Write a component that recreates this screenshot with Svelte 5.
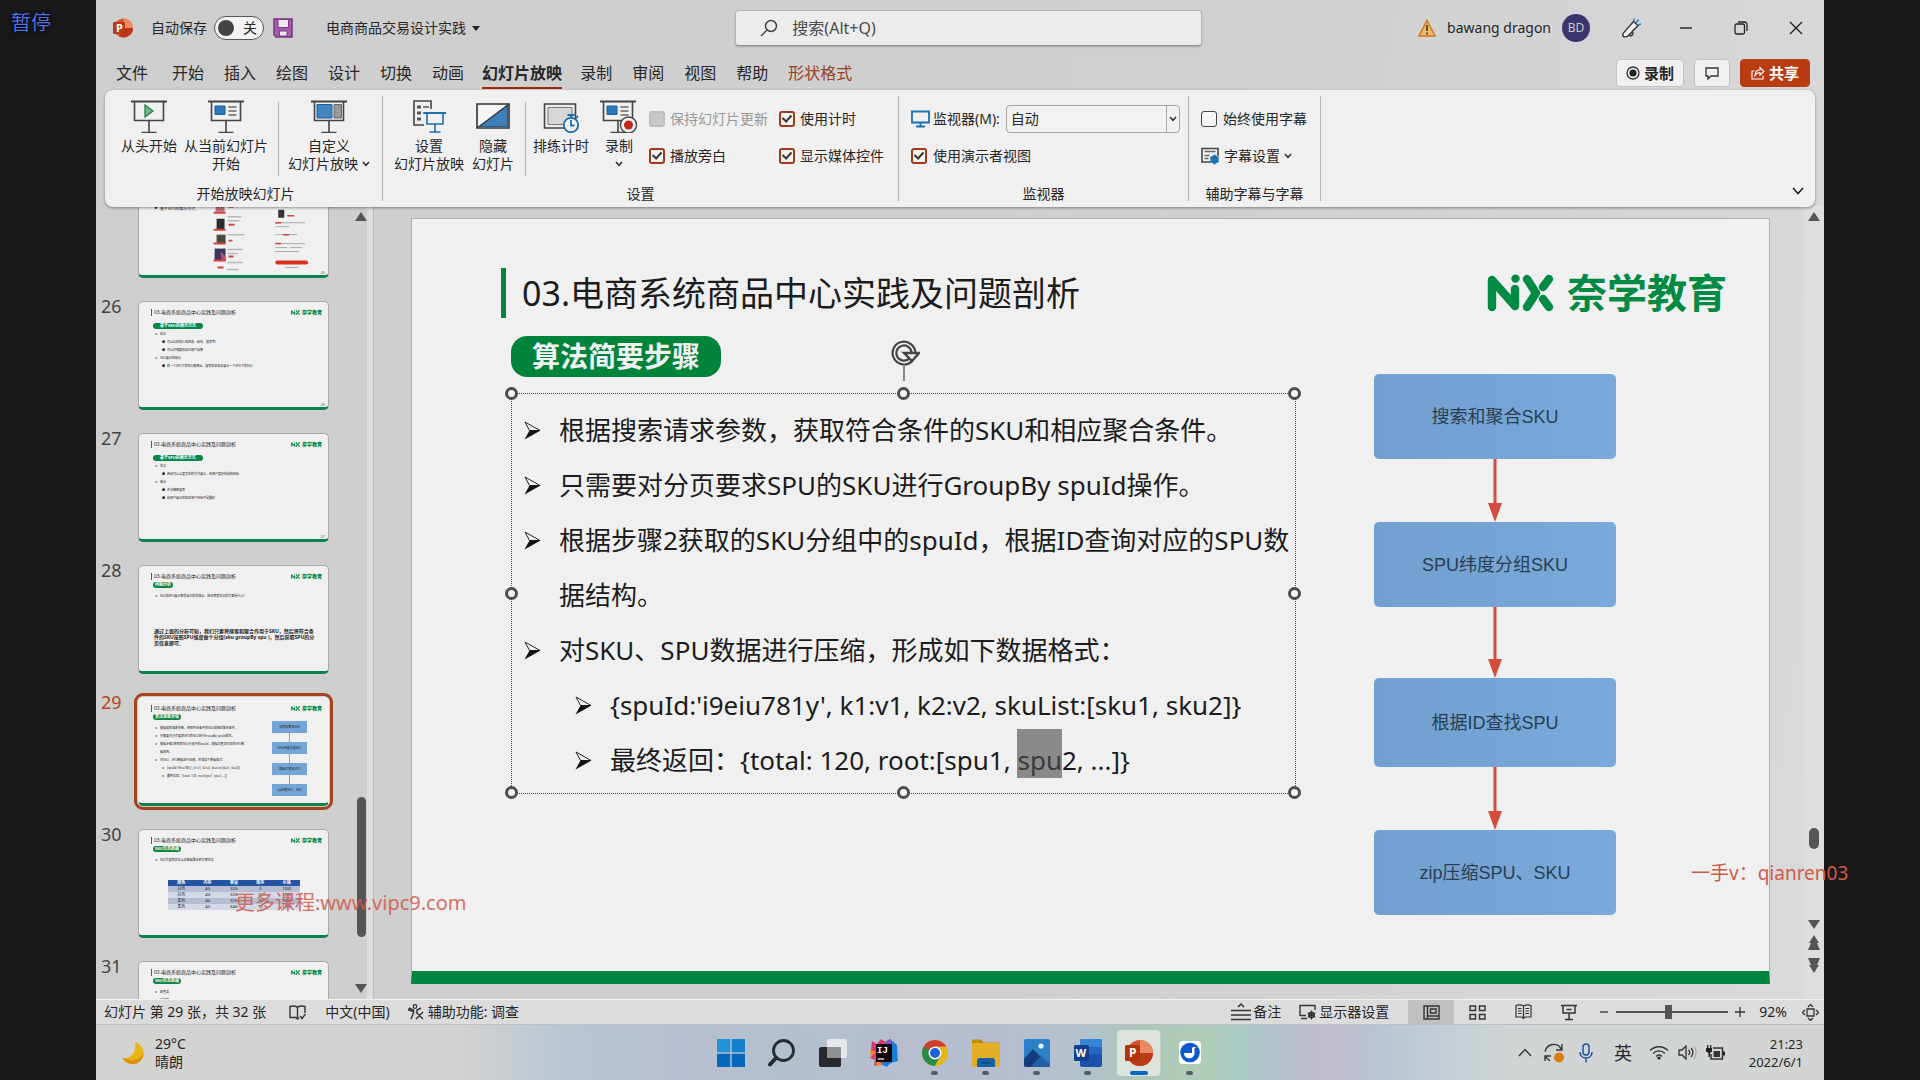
<script>
  const tabs = ['文件', '开始', '插入', '绘图', '设计', '切换', '动画', '幻灯片放映', '录制', '审阅', '视图', '帮助', '形状格式'];
  const deckTitle = '03.电商系统商品中心实践及问题剖析';
  const thumbs = [
    { n: 25, kind: 'shots' },
    { n: 26, kind: 'list', wide: true, badge: '基于SKU的展示方式', items: [[0, '优点'], [1, '可以比较和价格筛选（品名、搜索等）'], [1, '可以仔细甄别自己想产品哪'], [0, 'SKU展示的缺点'], [1, '同一个SPU下的SKU很相似，搜索结果容易展示一个SPU下的SKU']] },
    { n: 27, kind: 'list', wide: true, badge: '基于SPU的展示方式', items: [[0, '优点'], [1, '商品可以以更灵活的方式展示，给用户更好的选择体验'], [0, '缺点'], [1, '无法精确搜索'], [1, '给用户展示的结果用户体验不是最好'] ] },
    { n: 28, kind: 'list', badge: '问题分析', items: [[0, 'SKU和SPU展示都有自己的优缺点，结合两者优点的方案是什么?']], note: '通过上面的分析可知，我们只要将搜索和聚合作用于SKU，然后将符合条件的SKU按照SPU维度做个分组(sku groupBy spu )，然后获取SPU的分页信息即可。' },
    { n: 29, kind: 'list', badge: '算法简要步骤', flow: true, items: [[0, '根据搜索请求参数，获取符合条件的SKU和相应聚合条件。'], [0, '只需要对分页要求SPU的SKU进行GroupBy spuId操作。'], [0, '根据步骤2获取的SKU分组中的spuId，根据ID查询对应的SPU数\n据结构。'], [0, '对SKU、SPU数据进行压缩，形成如下数据格式：'], [1, "{spuId:'i9eiu781y', k1:v1, k2:v2, skuList:[sku1, sku2]}"], [1, '最终返回：{total: 120, root:[spu1, spu2, ...]}']] },
    { n: 30, kind: 'list', badge: 'SKU信息数据', items: [[0, 'SKU为搜索优化以及数据聚合的方案优化']], table: true },
    { n: 31, kind: 'list', badge: 'SKU信息数据', items: [[0, '颜色类'], [0, '规格类']] }
  ];
  const rows = [['白色', '4G', '32G', '0', '1000'], ['白色', '4G', '62G', '20', '1200'], ['黑色', '4G', '32G', '10', '1000'], ['黑色', '4G', '64G', '10', '1200']];
  const steps = ['搜索和聚合SKU', 'SPU纬度分组SKU', '根据ID查找SPU', 'zip压缩SPU、SKU'];
  const handles = ['tl', 'tc', 'tr', 'ml', 'mr', 'bl', 'bc', 'br'];
</script>

{#snippet chev()}
  <svg class="chev" width="8" height="6" viewBox="0 0 8 6"><path d="M1 1l3 3.4L7 1" fill="none" stroke="#333" stroke-width="1.6" /></svg>
{/snippet}
{#snippet mark()}
  <svg class="mark" viewBox="0 0 68 38" aria-label="NX">
    <g fill="none" stroke="#008a44" stroke-width="8.4" stroke-linecap="round" stroke-linejoin="round">
      <path d="M5 33V6L28 32V15" /><path d="M40 5l9 14-9 14" /><path d="M62 5l-6 8M56 25l6 8" />
    </g>
    <circle cx="28.5" cy="4.6" r="4.2" fill="#008a44" />
  </svg>
{/snippet}
{#snippet screen()}
  <path d="M0 1.5h36" stroke="#444" stroke-width="2" /><path d="M3.5 2v18.500h29V2M18 20.500v12M10.500 32.500h15" fill="none" stroke="#444" stroke-width="1.600" />
{/snippet}
{#snippet arrowBullet()}
  <svg class="bullet" viewBox="0 0 17 19"><path d="M1 1l15 8.500H5.500z" fill="#f0f0f0" stroke="#222" stroke-width="1" /><path d="M5.500 9.500H16.500L.5 18.500z" fill="#111" /></svg>
{/snippet}

<div class="desktop" lang="zh-CN">
  <div class="paused">暂停</div>
  <div class="window">
    <header class="titlebar">
      <svg width="20" height="20" viewBox="0 0 20 20"><circle cx="10.500" cy="10" r="9.500" fill="#d35230" /><path d="M10.500.5a9.500 9.500 0 0 1 9.500 9.500h-9.500z" fill="#f08a60" /><path d="M10.500 10H20a9.500 9.500 0 0 1-14 8.300z" fill="#b8391a" /><rect y="4" width="12" height="12" rx="1" fill="#bd3a17" /><text x="3" y="14" font-size="11" font-weight="700" fill="#fff">P</text></svg>
      <label class="autosave">自动保存 <button class="toggle" role="switch" aria-checked="false"><i></i>关</button></label>
      <button class="bare save" aria-label="保存"><svg width="20" height="20" viewBox="0 0 20 20"><path d="M1 1h18v18H3l-2-2z" fill="#a55cab" stroke="#7b3684" stroke-width="1.500" /><path d="M5 1.500h10.500v8H5zM6.500 13h7.500v5H6.500z" fill="#f1e8f2" stroke="#7b3684" /></svg></button>
      <button class="bare doc">电商商品交易设计实践 <svg width="8" height="5" viewBox="0 0 8 5"><path d="M0 0h8L4 5z" fill="#222" /></svg></button>
      <label class="search"><svg width="18" height="18" viewBox="0 0 18 18"><circle cx="11" cy="7" r="5.500" fill="none" stroke="#444" stroke-width="1.500" /><path d="M7 11l-6 6" stroke="#444" stroke-width="1.500" /></svg><input aria-label="搜索" placeholder="搜索(Alt+Q)" /></label>
      <div class="account">
        <svg width="18" height="18" viewBox="0 0 18 18"><path d="M9 1.500L17 17H1z" fill="#eebb6c" stroke="#cc7a1c" stroke-width="1.500" /><path d="M9 6v6M9 13.500v2" stroke="#333" stroke-width="1.600" /></svg>
        <span class="user">bawang dragon</span><span class="avatar">BD</span>
        <button class="bare pen" aria-label="即将推出"><svg width="20" height="20" viewBox="0 0 20 20"><path d="M12.500 3.500l4.500 4-9 9.500c-1.500 2-3.500 2-5 1.800-1.500-.8-1.500-2-.8-3.500z" fill="#f2f2f2" stroke="#333" stroke-width="1.400" /><path d="M8.500 16c-.5 3 3.500 3 3.500-2" fill="none" stroke="#333" stroke-width="1.300" /><path d="M13 3V.5M15.500 4.500l2-3M17.500 7l2.500-1" stroke="#2579bd" stroke-width="1.500" /></svg></button>
        <button class="bare" aria-label="最小化"><svg width="14" height="14" viewBox="0 0 14 14"><path d="M1 7h12" stroke="#222" stroke-width="1.400" /></svg></button>
        <button class="bare" aria-label="还原"><svg width="14" height="14" viewBox="0 0 14 14"><rect x="1" y="3" width="9.500" height="10" rx="1.500" fill="none" stroke="#222" stroke-width="1.300" /><path d="M4 1h6.500a2.500 2.500 0 0 1 2.500 2.500V10" fill="none" stroke="#222" stroke-width="1.300" /></svg></button>
        <button class="bare" aria-label="关闭"><svg width="14" height="14" viewBox="0 0 14 14"><path d="M1 1l12 12M13 1L1 13" stroke="#222" stroke-width="1.400" /></svg></button>
      </div>
    </header>

    <nav class="tabs">
      {#each tabs as t}<button class="tab" class:on={t === '幻灯片放映'} class:ctx={t === '形状格式'}>{t}</button>{/each}
      <div class="actions">
        <button class="act"><svg width="14" height="14" viewBox="0 0 14 14"><circle cx="7" cy="7" r="6" fill="none" stroke="#333" stroke-width="1.300" /><circle cx="7" cy="7" r="3.600" fill="#222" /></svg>录制</button>
        <button class="act note" aria-label="批注"><svg width="14" height="13" viewBox="0 0 14 13"><path d="M1 1h12v8H6l-3 3V9H1z" fill="none" stroke="#333" stroke-width="1.300" /></svg></button>
        <button class="act share"><svg width="14" height="14" viewBox="0 0 14 14"><path d="M3.500 5H1v8h11V9.500M4 9.500c0-4 2-5.500 5-5.500V1.500L13 5.500l-4 3.500V6.500C7 6.500 5.500 7 4 9.500z" fill="none" stroke="#fff" stroke-width="1.100" /></svg>共享</button>
      </div>
    </nav>

    <section class="ribbon">
      <div class="group g1">
        <div class="tools">
          <button class="tool w66"><svg width="36" height="33" viewBox="0 0 36 33">{@render screen()}<path d="M14 5v12l8-6z" fill="#74b88c" stroke="#23824a" stroke-width="1.300" /></svg><span>从头开始</span></button>
          <button class="tool w88"><svg width="36" height="33" viewBox="0 0 36 33">{@render screen()}<path d="M7 6h10v8.500H7z" fill="#2e77b8" stroke="#1b5f9f" /><path d="M20.500 7h8M20.500 11h8M20.500 15h8" stroke="#666" stroke-width="1.500" /></svg><span>从当前幻灯片</span><span>开始</span></button>
          <i class="rule"></i>
          <button class="tool w88 custom"><svg width="36" height="33" viewBox="0 0 36 33">{@render screen()}<path d="M6 4.500h15V18H6z" fill="#4384bd" stroke="#1b5f9f" /><path d="M23 4.500h7.500V18H23z" fill="#999" stroke="#666" /></svg><span>自定义</span><span>幻灯片放映 {@render chev()}</span></button>
        </div>
        <h2>开始放映幻灯片</h2>
      </div>
      <div class="group g2">
        <div class="tools">
          <button class="tool w74"><svg width="36" height="33" viewBox="0 0 36 33"><path d="M13 25H3V1h17v8" fill="none" stroke="#444" stroke-width="1.600" /><path d="M6 5.500h4v3H6zM6 11.500h4v3H6zM6 17.500h4v3H6z" fill="#555" /><path d="M12 7h6M12 13h2" stroke="#555" stroke-width="1.400" /><path d="M13 13h22" stroke="#1d6fae" stroke-width="2" /><path d="M16 13v11h16V13M24 24v8M18.500 32h11" fill="none" stroke="#1d6fae" stroke-width="1.600" /></svg><span>设置</span><span>幻灯片放映</span></button>
          <button class="tool w54"><svg width="34" height="33" viewBox="0 0 34 33"><path d="M1 4h32v24H1z" fill="#f4f4f4" stroke="#333" stroke-width="1.600" /><path d="M31.500 6v20.500H4z" fill="#3f80b9" stroke="#1b5f9f" /><path d="M1 28L33 4" stroke="#333" stroke-width="1.200" /></svg><span>隐藏</span><span>幻灯片</span></button>
          <i class="rule"></i>
          <button class="tool w66"><svg width="36" height="33" viewBox="0 0 36 33"><path d="M1.500 4h31v24h-31z" fill="#eee" stroke="#444" stroke-width="1.600" /><path d="M5 7.500h24v17H5z" fill="#d8d6d8" stroke="#777" /><circle cx="28" cy="25" r="7.200" fill="#f0f0f0" stroke="#1d6fae" stroke-width="1.800" /><path d="M28 20v5.500h3.500M28 17.500V15M24.500 15h7M33 18l2-2" fill="none" stroke="#1d6fae" stroke-width="1.800" /></svg><span>排练计时</span></button>
          <button class="tool w46"><svg width="38" height="33" viewBox="0 0 38 33">{@render screen()}<path d="M7 6h10v8.500H7z" fill="#2e77b8" stroke="#1b5f9f" /><path d="M20.500 7h8M20.500 11h8M20.500 15h8" stroke="#666" stroke-width="1.500" /><circle cx="28.500" cy="25" r="8" fill="#f3f3f3" stroke="#444" stroke-width="1.400" /><circle cx="28.500" cy="25" r="4.500" fill="#c2261c" /></svg><span>录制</span><span>{@render chev()}</span></button>
          <div class="checks two">
            <label class="off"><input type="checkbox" disabled />保持幻灯片更新</label>
            <label><input type="checkbox" checked />使用计时</label>
            <label><input type="checkbox" checked />播放旁白</label>
            <label><input type="checkbox" checked />显示媒体控件</label>
          </div>
        </div>
        <h2>设置</h2>
      </div>
      <div class="group g3">
        <div class="checks one">
          <label><svg width="19" height="18" viewBox="0 0 19 18"><path d="M1 1.500h17v11H1zM9.500 12.500v4M5 16.500h9" fill="none" stroke="#1d6fae" stroke-width="1.800" /></svg><span class="mon">监视器(M):</span><span class="pick"><select><option>自动</option></select>{@render chev()}</span></label>
          <label><input type="checkbox" checked />使用演示者视图</label>
        </div>
        <h2>监视器</h2>
      </div>
      <div class="group g4">
        <div class="checks one">
          <label><input type="checkbox" />始终使用字幕</label>
          <button class="bare cap"><svg width="19" height="18" viewBox="0 0 19 18"><path d="M10 15H1V1.500h16V9" fill="#f2f2f2" stroke="#444" stroke-width="1.600" /><path d="M3.500 4.500h11M3.500 8.500h5M3.500 11.500h4" stroke="#666" stroke-width="1.300" /><circle cx="13.500" cy="12.500" r="3" fill="none" stroke="#1d6fae" stroke-width="2.400" /><path d="M13.500 7.500v10M9.200 10l8.600 5M9.200 15l8.600-5" stroke="#1d6fae" stroke-width="1.400" /></svg>字幕设置 {@render chev()}</button>
        </div>
        <h2>辅助字幕与字幕</h2>
      </div>
      <button class="bare fold" aria-label="折叠功能区"><svg width="12" height="8" viewBox="0 0 12 8"><path d="M1 1l5 5.500L11 1" fill="none" stroke="#222" stroke-width="1.600" /></svg></button>
    </section>

    <main class="work">
      <aside class="panel">
        <div class="strip">
          {#each thumbs as t, i}
            <div class="entry" class:sel={t.n === 29}>
              <span class="num">{i ? t.n : ''}</span>
              <div class="thumb">
                {#if t.kind === 'shots'}
                  <svg class="shots" viewBox="0 0 190 105">
                    <text x="21" y="40" font-size="4" fill="#222">基于SPU的展示方式</text><path d="M16 36.500l3 1.500-3 1.500z" fill="#222" />
                    <g fill="#2c2c30"><rect x="77" y="33" width="9" height="9" fill="#b5707c" /><rect x="78" y="49" width="8" height="11" /><rect x="78" y="65" width="9" height="9" fill="#4b4a3c" /><rect x="76" y="79" width="11" height="12" fill="#3a3860" /></g>
                    <path d="M82 82l5 5v4h-4z" fill="#c44a72" />
                    <path d="M75 43h12M75 60h12M75 74h12M75 91h12M79 98h6M90 37h5M90 55h6M90 71h4M90 87h5" stroke="#d0453a" stroke-width="2" />
                    <path d="M89 34h10M89 47h14M89 51h12M89 65h17M89 80h15M89 84h10M89 93h15M88 100h12" stroke="#b9b9b9" stroke-width="1.500" />
                    <path d="M135 36h28M137 53h30M137 57h14M137 65h22M137 74h30M137 78h12M152 78h12M137 82h24M147 98h13" stroke="#aaa" stroke-width="1" />
                    <rect x="140" y="40" width="6" height="8" fill="#333" /><path d="M149 46h7M137 53h6M145 65h6M137 74h6" stroke="#d0453a" stroke-width="1.500" /><rect x="137" y="91" width="33" height="4" rx="2" fill="#d8311f" />
                  </svg>
                {:else}
                  <div class="thead" class:wide={t.wide}><b></b><span>{deckTitle}</span><em>{@render mark()}奈学教育</em></div>
                  <strong class="tbadge">{t.badge}</strong>
                  <div class="tbody">
                    <ul>{#each t.items as [lvl, text]}<li class:sub={lvl === 1} class:dot={lvl === 1 && t.wide}>{text}</li>{/each}</ul>
                    {#if t.flow}<div class="tflow">{#each steps as s}<span>{s}</span>{/each}</div>{/if}
                  </div>
                  {#if t.note}<p>{t.note}</p>{/if}
                  {#if t.table}
                    <table><thead><tr><th>颜色</th><th>内存</th><th>容量</th><th>库存</th><th>价格</th></tr></thead>
                      <tbody>{#each rows as r}<tr>{#each r as c}<td>{c}</td>{/each}</tr>{/each}</tbody></table>
                  {/if}
                {/if}
                {#if t.n < 28}<small>{t.n}</small>{/if}
              </div>
            </div>
          {/each}
        </div>
        <div class="scroll left">
          <svg width="12" height="9" viewBox="0 0 12 9"><path d="M6 0l6 9H0z" fill="#555" /></svg>
          <i></i>
          <svg width="12" height="9" viewBox="0 0 12 9"><path d="M6 9l6-9H0z" fill="#555" /></svg>
        </div>
      </aside>

      <section class="canvas">
        <article class="slide">
          <div class="head"><h1>{deckTitle}</h1><div class="logo">{@render mark()}<span>奈学教育</span></div></div>
          <div class="content">
            <div class="left">
              <h3 class="badge">算法简要步骤</h3>
              <div class="textbox">
                <svg class="rot" width="30" height="44" viewBox="0 0 30 44"><path d="M14 26v15" stroke="#444" stroke-width="1.200" /><path d="M23.500 13a9.500 9.500 0 1 0-3 7" fill="none" stroke="#444" stroke-width="6" /><path d="M23.500 13a9.500 9.500 0 1 0-3 7" fill="none" stroke="#f0f0f0" stroke-width="1.600" /><path d="M14 13h15l-7 8z" fill="#f0f0f0" stroke="#444" stroke-width="2.400" /></svg>
                {#each handles as h}<i class="handle {h}"></i>{/each}
                <ul>
                  <li>{@render arrowBullet()}<span>根据搜索请求参数，获取符合条件的SKU和相应聚合条件。</span></li>
                  <li>{@render arrowBullet()}<span>只需要对分页要求SPU的SKU进行GroupBy spuId操作。</span></li>
                  <li>{@render arrowBullet()}<span>根据步骤2获取的SKU分组中的spuId，根据ID查询对应的SPU数据结构。</span></li>
                  <li>{@render arrowBullet()}<span>对SKU、SPU数据进行压缩，形成如下数据格式：</span></li>
                  <li class="sub">{@render arrowBullet()}<span>{"{spuId:'i9eiu781y', k1:v1, k2:v2, skuList:[sku1, sku2]}"}</span></li>
                  <li class="sub">{@render arrowBullet()}<span>{'最终返回：{total: 120, root:[spu1, '}<mark>spu</mark>{'2, ...]}'}</span></li>
                </ul>
              </div>
            </div>
            <div class="flow">
              {#each steps as s, i}
                {#if i}<svg class="arrow a{i}" width="14" viewBox="0 0 14 72" preserveAspectRatio="xMidYMax slice"><path d="M7 0v56" stroke="#d44c3c" stroke-width="3" /><path d="M0 53h14L7 72z" fill="#d44c3c" /></svg>{/if}
                <div class="step" class:tall={i === 2}>{s}</div>
              {/each}
            </div>
          </div>
        </article>
      </section>
      <div class="scroll right">
        <svg width="12" height="9" viewBox="0 0 12 9"><path d="M6 0l6 9H0z" fill="#555" /></svg>
        <i></i>
        <svg width="12" height="9" viewBox="0 0 12 9"><path d="M6 9l6-9H0z" fill="#555" /></svg>
        <svg width="12" height="16" viewBox="0 0 12 16"><path d="M6 0l5 8H9l3 7H0l3-7H1z" fill="#555" /></svg>
        <svg width="12" height="16" viewBox="0 0 12 16"><path d="M6 16l5-8H9l3-7H0l3 7H1z" fill="#555" /></svg>
      </div>
    </main>

    <footer class="status">
      <span>幻灯片 第 29 张，共 32 张</span>
      <svg class="book" width="17" height="15" viewBox="0 0 17 15"><path d="M8.500 2v10.500M8.500 2C6 .8 3 .8 1 1.500v11h6l1.500 1.500 1.500-1.500M8.500 2c2.500-1.200 5.500-1.200 7.500-.5V8M11 11l2 2.500L16.500 9" fill="none" stroke="#333" stroke-width="1.400" /></svg>
      <span class="langname">中文(中国)</span>
      <button class="bare"><svg width="16" height="16" viewBox="0 0 16 16"><circle cx="7" cy="2.500" r="1.800" fill="none" stroke="#333" stroke-width="1.200" /><path d="M1 4l4.500 2v3L3 15M13 4L9 6v2.500M1 4.500L0.500 6 5 7.500M8 8l7 7M15 8l-7 7" fill="none" stroke="#333" stroke-width="1.400" /></svg> 辅助功能: 调查</button>
      <div class="stright">
        <button class="bare notes"><svg width="20" height="18" viewBox="0 0 20 18"><path d="M0 7.500h20M0 12h20M0 16.500h20M7 4l3-3 3 3" fill="none" stroke="#333" stroke-width="1.500" /></svg>备注</button>
        <button class="bare disp"><svg width="18" height="16" viewBox="0 0 18 16"><path d="M7 11.500H1V1.500h15V6M2 14.500h6" fill="none" stroke="#333" stroke-width="1.400" /><circle cx="12.500" cy="11" r="2.600" fill="none" stroke="#333" stroke-width="1.800" /><path d="M12.500 6.500v9M8.600 8.800l7.800 4.400M8.600 13.200l7.800-4.400" stroke="#333" /></svg> 显示器设置</button>
        <button class="view cur" aria-label="普通视图"><svg width="17" height="15" viewBox="0 0 17 15"><path d="M1 1h15v13H1zM4.500 1v13M4.500 11H16M7.500 4h5.500v4H7.500z" fill="none" stroke="#333" stroke-width="1.400" /></svg></button>
        <button class="view" aria-label="幻灯片浏览"><svg width="17" height="15" viewBox="0 0 17 15"><path d="M1 1h5.500v4.500H1zM10.500 1H16v4.500h-5.500zM1 9.500h5.500V14H1zM10.500 9.500H16V14h-5.500z" fill="none" stroke="#333" stroke-width="1.400" /></svg></button>
        <button class="view" aria-label="阅读视图"><svg width="17" height="16" viewBox="0 0 17 16"><path d="M8.500 2v12M8.500 2C6 .8 3 .8 1 1.500v11.500h6l1.500 1.500L10 13h6V1.500c-2-.7-5-.7-7.500.5M3 4.500h3.500M3 7h3.500M3 9.500h3.500M10.500 4.500H14M10.500 7H14M10.500 9.500H14" fill="none" stroke="#333" stroke-width="1.200" /></svg></button>
        <button class="view" aria-label="幻灯片放映"><svg width="16" height="17" viewBox="0 0 16 17"><path d="M0 1.500h16M2 1.500V9h12V1.500M8 9v6.500M4 15.500h8M5.500 5.500h5" fill="none" stroke="#333" stroke-width="1.500" /></svg></button>
        <button class="bare zoomb" aria-label="缩小"><svg width="10" height="10" viewBox="0 0 10 10"><path d="M1 5h8" stroke="#333" stroke-width="1.300" /></svg></button>
        <input class="zoom" type="range" min="0" max="100" value="46" aria-label="缩放" />
        <button class="bare zoomb" aria-label="放大"><svg width="10" height="10" viewBox="0 0 10 10"><path d="M0 5h10M5 0v10" stroke="#333" stroke-width="1.300" /></svg></button>
        <span class="pct">92%</span>
        <button class="bare" aria-label="适应窗口"><svg width="17" height="17" viewBox="0 0 17 17"><path d="M5 5h7v7H5zM6 3l2.500-2.500L11 3M6 14l2.500 2.500L11 14M3 6L.5 8.500 3 11M14 6l2.500 2.500L14 11" fill="none" stroke="#333" stroke-width="1.300" /></svg></button>
      </div>
    </footer>

    <footer class="taskbar">
      <div class="weather">
        <svg width="22" height="24" viewBox="0 0 22 24"><path d="M13 1c4 1 8.500 5 8.500 11C21.500 18 17 23 11 23 6 23 2 20.500.500 16.500 8 19 15 12 13 1z" fill="#eab413" /><path d="M.5 16.500C2 20.500 6 23 11 23c6 0 10.500-5 10.500-11C18 19 9 21 .500 16.500z" fill="#dd8f0c" /></svg>
        <div><span>29°C</span><span>晴朗</span></div>
      </div>
      <div class="apps">
        <button class="app" aria-label="开始"><svg width="28" height="28" viewBox="0 0 28 28"><path d="M0 0h13.300v13.300H0z" fill="#2294d4" /><path d="M14.700 0H28v13.300H14.700z" fill="#1480cc" /><path d="M0 14.700h13.300V28H0zM14.700 14.700H28V28H14.700z" fill="#0568bd" /></svg></button>
        <button class="app" aria-label="搜索"><svg width="28" height="28" viewBox="0 0 28 28"><circle cx="15.500" cy="11.500" r="10" fill="none" stroke="#262b31" stroke-width="2.800" /><path d="M8 19l-6 6.500" stroke="#262b31" stroke-width="4" stroke-linecap="round" /></svg></button>
        <button class="app" aria-label="任务视图"><svg width="28" height="28" viewBox="0 0 28 28"><rect y="8" width="22" height="20" rx="2" fill="#26292d" /><rect x="8" y="0" width="20" height="19" rx="2" fill="#f5f5f5" opacity=".75" /><path d="M8 8h14v11H8z" fill="#8e9194" /></svg></button>
        <button class="app" aria-label="IntelliJ IDEA"><svg width="28" height="28" viewBox="0 0 28 28"><path d="M2 2l5 3 4-5 6 4-4 20-9 3 1-6-5-2 3-4-2-4z" fill="#dd3a6c" /><path d="M5 18l2 9 6-1zM0 11l6 2-5 5z" fill="#f0892b" /><path d="M15 3l5-3 7 6 .8 16-7 2-4 4-6-3 8-5z" fill="#1580d8" /><path d="M15 3l5-3 3 4-6 4z" fill="#7f56c9" /><rect x="6" y="5" width="16" height="18" fill="#16090d" /><text x="7" y="14" font-size="9" font-weight="700" fill="#fff" font-family="Liberation Mono">IJ</text><path d="M8 20h6" stroke="#fff" stroke-width="1.200" /></svg></button>
        <button class="app run" aria-label="Chrome"><svg width="28" height="28" viewBox="0 0 28 28"><circle cx="14" cy="14" r="13" fill="#e5b51c" /><path d="M14 14L2.700 7.500A13 13 0 0 1 25.300 7.500H14z" fill="#cf3d2e" /><path d="M2.700 7.500A13 13 0 0 0 13.500 27L19.600 17.200 14 14z" fill="#288c48" /><path d="M2.700 7.500L8 17l6-3V7.500z" fill="#cf3d2e" /><path d="M2.700 7.500L8.400 17.200 14 14 6 9z" fill="#288c48" /><circle cx="14" cy="14" r="6.500" fill="#fff" /><circle cx="14" cy="14" r="5" fill="#1f62d6" /></svg></button>
        <button class="app run" aria-label="文件资源管理器"><svg width="28" height="28" viewBox="0 0 28 28"><path d="M0 2q0-1.500 1.500-1.500H9l3 3H28V10H0z" fill="#c18a0c" /><rect y="4" width="28" height="24" rx="1" fill="#e3ad25" /><path d="M5 28v-6q0-3 3-3h12q3 0 3 3v6z" fill="#1263a8" /><path d="M9 24h10" stroke="#0b467b" stroke-width="1.500" /></svg></button>
        <button class="app run" aria-label="照片"><svg width="26" height="28" viewBox="0 0 26 28"><rect width="26" height="28" rx="2" fill="#2c80c8" /><path d="M0 20L9 10l17 18H2q-2 0-2-2z" fill="#123d7c" /><path d="M12 22l5-5 9 8v1q0 2-2 2H7z" fill="#245fa8" /><circle cx="17" cy="7" r="2.600" fill="#e9f2fa" /></svg></button>
        <button class="app run" aria-label="Word"><svg width="28" height="28" viewBox="0 0 28 28"><rect x="6" width="22" height="28" rx="2" fill="#1c52ad" /><path d="M8 0h18q2 0 2 2v6H6V2q0-2 2-2z" fill="#3784d6" /><path d="M6 8h22v7H6z" fill="#2565bd" /><rect y="6" width="15" height="16" rx="1.500" fill="#123f8b" /><text x="1.500" y="18" font-size="11" font-weight="700" fill="#fff">W</text></svg></button>
        <button class="app run active" aria-label="PowerPoint"><svg width="28" height="28" viewBox="0 0 28 28"><circle cx="15" cy="14" r="13" fill="#d2532d" /><path d="M15 1a13 13 0 0 1 13 13H15z" fill="#ea8a65" /><path d="M15 14h13a13 13 0 0 1-24 7z" fill="#b93d19" /><rect y="6" width="15" height="16" rx="1.500" fill="#b2340f" /><text x="4" y="18" font-size="12" font-weight="700" fill="#fff">P</text></svg></button>
        <button class="app run" aria-label="音乐"><svg width="22" height="23" viewBox="0 0 22 23"><rect width="22" height="23" rx="4" fill="#fff" /><circle cx="11" cy="11.500" r="9.800" fill="#0e57cf" /><path d="M5 12h8V7.500q0-1.500 1.500-1.500h2.500l-1.500 1.800V12c0 7-10.500 7-10.500 0z" fill="#fff" /></svg></button>
      </div>
      <div class="tray">
        <svg class="more" width="14" height="9" viewBox="0 0 14 9"><path d="M1 8l6-6.500L13 8" fill="none" stroke="#333" stroke-width="1.400" /></svg>
        <svg class="sync" width="20" height="20" viewBox="0 0 20 20"><path d="M1 8.500C3 0 14-1 17 6M18 1v6h-6M1 18v-5h6M1 13.500l5 4.500" fill="none" stroke="#333" stroke-width="1.400" /><circle cx="15" cy="14.500" r="5" fill="#d97e0c" /></svg>
        <svg width="14" height="20" viewBox="0 0 14 20"><rect x="4" y="1" width="6" height="11" rx="3" fill="none" stroke="#20539a" stroke-width="1.500" /><path d="M1 9c0 8 12 8 12 0M7 15v4.500" fill="none" stroke="#20539a" stroke-width="1.500" /></svg>
        <span class="ime">英</span>
        <svg width="20" height="15" viewBox="0 0 20 15"><path d="M1 5.500c5-5 13-5 18 0M4 8.500c3.500-3.500 8.500-3.500 12 0M7 11.500c2-2 4-2 6 0" fill="none" stroke="#333" stroke-width="1.400" /><circle cx="10" cy="13" r="1.600" fill="#222" /></svg>
        <svg width="19" height="15" viewBox="0 0 19 15"><path d="M1 5h3l4-4v13l-4-4H1z" fill="none" stroke="#333" stroke-width="1.300" /><path d="M10.500 5c1.500 1.500 1.500 3.500 0 5M13 3c2.500 2.500 2.500 6.500 0 9" fill="none" stroke="#333" stroke-width="1.300" /><path d="M15.500 1c3.500 3.500 3.500 9.500 0 13" fill="none" stroke="#999" /></svg>
        <svg width="19" height="16" viewBox="0 0 19 16"><path d="M7 3h9.500v11H5V9" fill="none" stroke="#333" stroke-width="1.500" /><path d="M7.500 6H14v6H7.500z" fill="#333" /><path d="M17 6.500h2v4h-2zM0 3h6v3.500l-2 1.500v4H2.500V8L0 6.500zM1 0h1.300v3H1zM4 0h1.300v3H4z" fill="#222" /></svg>
        <div class="clock"><span>21:23</span><span>2022/6/1</span></div>
      </div>
    </footer>
  </div>
  <div class="wm one">更多课程:www.vipc9.com</div>
  <div class="wm two">一手v：qianren03</div>
</div>

<style>
  :global(body) { margin: 0; background: #181818; }
  * { box-sizing: border-box; }
  .desktop { position: relative; min-height: 100vh; padding: 0 5%; background: #181818; color: #262626; font: 14px/18px "Noto Sans", "Noto Sans CJK SC", sans-serif; overflow: hidden; }
  .window { display: flex; flex-direction: column; height: 100vh; background: linear-gradient(100deg, #cecece, #d0d0d0 60%, #dadada); }
  button, input, select { font: inherit; color: inherit; margin: 0; }
  button { border: 0; padding: 0; background: none; white-space: nowrap; }
  svg { display: block; flex: none; }
  h1, h2, h3, ul, p { margin: 0; padding: 0; font-weight: 400; }
  li { list-style: none; }
  .bare { display: flex; align-items: center; gap: 4px; }
  .paused { position: absolute; left: 11px; top: 9px; font-size: 20px; line-height: 28px; color: #4f74e6; text-shadow: 0 0 2px #000, 0 0 3px #000; }

  .titlebar { position: relative; display: flex; align-items: center; height: 56px; padding: 0 21px 0 17px; flex: none; }
  .autosave { display: flex; align-items: center; gap: 7px; margin-left: 18px; }
  .toggle { display: flex; align-items: center; justify-content: space-between; width: 50px; height: 24px; padding: 0 6px 0 3px; border: 1px solid #555; border-radius: 12px; background: #f3f3f3; }
  .toggle i { width: 16px; height: 16px; border-radius: 50%; background: #444; }
  .save { margin-left: 9px; }
  .doc { margin-left: 33px; gap: 6px; }
  .search { position: absolute; left: 37%; width: 27%; top: 10px; height: 36px; display: flex; align-items: center; gap: 12px; padding-left: 24px; border: 1px solid #b4b4b4; border-bottom-color: #8f8f8f; border-radius: 4px; background: #ececec; box-shadow: 0 1px 2px #0003; }
  .search input { flex: 1; min-width: 0; border: 0; background: none; outline: 0; font-size: 16px; }
  .search input::placeholder { color: #4a4a4a; opacity: 1; }
  .account { display: flex; align-items: center; margin-left: auto; gap: 41px; }
  .user { margin-left: -30px; }
  .avatar { width: 28px; height: 28px; margin-left: -30px; border-radius: 50%; background: #38356f; color: #ccc; font-size: 12px; line-height: 28px; text-align: center; }
  .pen { margin-left: -10px; margin-right: -3px; }

  .tabs { display: flex; align-items: center; height: 34px; padding: 0 14px 0 20px; gap: 20px; flex: none; }
  .tab { height: 31px; font-size: 16px; line-height: 30px; border-bottom: 2px solid transparent; }
  .tab:first-child { margin-right: 4px; }
  .tab.on { margin: 0 -2px; font-weight: 700; border-color: #a02c10; }
  .tab.ctx { color: #99401f; }
  .actions { display: flex; gap: 10px; margin-left: auto; }
  .act { display: flex; align-items: center; justify-content: center; gap: 4px; width: 68px; height: 28px; border: 1px solid #c4c4c4; border-radius: 4px; background: #f1f1f1; font-size: 15px; font-weight: 700; }
  .act.note { width: 36px; }
  .act.share { width: 70px; background: #b93c12; border-color: #b93c12; color: #fff; }

  .ribbon { position: relative; z-index: 2; display: flex; height: 117px; margin: 0 9px; padding-top: 6px; border-radius: 8px; background: #f0f0f0; box-shadow: 0 1px 3px #0006; flex: none; }
  .group { display: flex; flex-direction: column; height: 105px; border-right: 1px solid #b2b2b2; }
  .g1 { width: 278px; } .g2 { width: 516px; } .g3 { width: 290px; } .g4 { width: 132px; }
  .group h2 { margin-top: auto; font-size: 14px; line-height: 15px; text-align: center; }
  .g1 h2 { padding-left: 4px; }
  .tools { display: flex; padding: 4px 0 0 11px; }
  .g2 .tools { padding-left: 9px; }
  .tool { display: flex; flex-direction: column; align-items: center; height: 74px; line-height: 18px; }
  .tool svg:first-child { margin-bottom: 4px; }
  .tool span { display: flex; align-items: center; gap: 4px; min-height: 18px; }
  .tool span .chev { margin: 0; }
  .w66 { width: 66px; } .w88 { width: 88px; } .w74 { width: 74px; } .w54 { width: 54px; } .w46 { width: 46px; margin-left: 2px; }
  .rule { width: 1px; height: 74px; margin: 2px 4px 0 8px; background: #b2b2b2; }
  .g2 .rule { margin: 2px 2px 0 5px; }
  .custom { width: 92px; }
  .checks { display: grid; grid-template-rows: 37px 37px; align-items: center; }
  .checks label, .cap { display: flex; align-items: center; gap: 6px; white-space: nowrap; }
  .checks.two { grid-template-columns: 130px auto; margin-left: 7px; }
  .checks.two label { gap: 5px; }
  .checks.one { padding: 4px 0 0 12px; }
  .off { color: #989898; }
  input[type=checkbox] { appearance: none; width: 16px; height: 16px; border: 2px solid #a03a18; border-radius: 3px; background: #f5f5f5; flex: none; display: grid; place-items: center; }
  input[type=checkbox]:checked::after { content: ""; width: 4px; height: 7px; margin-bottom: 2px; border: solid #333; border-width: 0 2px 2px 0; rotate: 42deg; }
  input[type=checkbox]:disabled { border-color: #bfbfbf; background: #c8c8c8; }
  .g4 input[type=checkbox] { border: 1px solid #444; }
  .mon { margin-left: -3px; }
  .pick { position: relative; width: 174px; }
  .pick select { appearance: none; display: block; width: 100%; height: 28px; padding: 0 4px; border: 1px solid #a6a6a6; border-radius: 4px; background: linear-gradient(90deg, #f2f2f2 159px, #a6a6a6 159px, #a6a6a6 160px, #f2f2f2 160px); }
  .pick .chev { position: absolute; right: 3px; top: 11px; }
  .cap { gap: 4px; }
  .fold { position: absolute; right: 11px; bottom: 12px; }

  .work { display: flex; flex: 1; min-height: 0; margin-top: -1px; }
  .panel { display: flex; width: 278px; padding-left: 5px; border-right: 1px solid #bdbdbd; box-shadow: inset -6px 0 #dedede; flex: none; }
  .strip { width: 248px; overflow: hidden; }
  .entry { display: flex; height: 132px; }
  .strip .entry:first-child { margin-top: -36px; }
  .num { width: 37px; font-size: 18px; line-height: 8px; color: #444; }
  .sel .num { color: #b4441f; }
  .thumb { position: relative; display: flex; flex-direction: column; width: 191px; height: 109px; margin-top: -1px; border: 1px solid #a9a9a9; border-bottom: 3px solid #098449; border-radius: 5px; background: #f0f0f0; overflow: hidden; font-size: 4px; line-height: 8px; color: #222; }
  .sel .thumb { outline: 3px solid #a3441f; outline-offset: 1px; border-color: #eee; border-bottom-color: #098449; }
  .thumb small { position: absolute; right: 3px; bottom: 0; font-size: 4px; line-height: 5px; color: #666; }
  .thead { display: flex; align-items: center; gap: 2px; height: 7px; margin: 7px 6px 0 12px; font-size: 5px; line-height: 7px; flex: none; }
  .thead b { width: 1px; height: 7px; background: #098449; }
  .thead em { display: flex; align-items: center; gap: 2px; margin-left: auto; font-style: normal; font-weight: 900; color: #008a44; font-size: 5px; }
  .thead .mark { width: 9px; height: 5px; }
  .tbadge { align-self: flex-start; margin: 2px 0 0 14px; padding: 0 2px; height: 6px; line-height: 6px; border-radius: 3px; background: #088547; color: #fff; font-size: 4px; flex: none; }
  .wide + .tbadge { margin-top: 7px; padding: 0 7px; }
  .wide + .tbadge + .tbody { margin-top: 1px; }
  .tbody { display: flex; margin: 4px 21px 0 16px; justify-content: space-between; font-size: 3px; }
  .tbody ul { width: 112px; }
  .tbody li { position: relative; padding-left: 5px; white-space: pre; }
  .tbody li::before { content: "➤"; position: absolute; left: 0; font-size: 3px; }
  .tbody li.sub { margin-left: 7px; }
  .tbody li.dot::before { content: "●"; }
  .tflow { display: flex; flex-direction: column; gap: 9px; margin-top: -3px; background: linear-gradient(#c98a84, #c98a84) center / 1px 100% no-repeat; }
  .tflow span { width: 35px; height: 12px; background: #75a5d6; line-height: 12px; text-align: center; }
  .thumb p { margin: 28px 12px 0 15px; font-size: 5px; line-height: 6px; font-weight: 700; }
  .thumb table { margin: 16px auto 0 29px; width: 132px; border-collapse: collapse; table-layout: fixed; font-size: 4px; line-height: 6px; text-align: center; }
  .thumb th, .thumb td { padding: 0; }
  .thumb thead { background: #2355a4; color: #fff; }
  .thumb tbody tr { background: #d4d9e8; }
  .thumb tbody tr:nth-child(odd) { background: #b6bdd3; }
  .scroll { display: flex; flex-direction: column; align-items: center; flex: none; }
  .scroll i { background: #555; border-radius: 5px; }
  .scroll.left { width: 24px; padding: 6px 0 6px; }
  .scroll.left i { width: 9px; height: 140px; margin: auto 0 47px; }
  .scroll.right { width: 20px; padding: 6px 0 26px; background: #dedede; gap: 6px; }
  .scroll.right i { width: 10px; height: 21px; margin: auto 0 65px; }

  .canvas { flex: 1; min-width: 0; padding: 12px 34px 15px 37px; display: flex; }
  .slide { flex: 1; min-width: 0; border: 1px solid #b0b0b0; border-bottom: 13px solid #00863f; background: #f0f0f0; padding: 48px 0 0 89px; color: #1c1c1c; }
  .head { display: flex; justify-content: space-between; align-items: center; height: 51px; padding-right: 42px; }
  h1 { border-left: 5px solid #00863f; padding-left: 16px; font-size: 34px; line-height: 50px; }
  .logo { display: flex; align-items: center; gap: 12px; color: #008a44; font-size: 40px; font-weight: 700; line-height: 44px; }
  .logo .mark { width: 68px; height: 38px; }
  .content { display: flex; gap: 78px; margin: 18px 153px 0 10px; }
  .left { flex: 1; min-width: 0; }
  .badge { width: 210px; height: 41px; border-radius: 16px; background: #00833a; color: #f2f2f2; font-size: 28px; line-height: 40px; font-weight: 700; text-align: center; }
  .textbox { position: relative; margin-top: 16px; padding: 9px 0 5px 12px; border: 1px dotted #444; }
  .textbox li { display: flex; font-size: 26px; line-height: 55px; }
  .textbox li.sub { padding-left: 51px; }
  .textbox .bullet { width: 17px; height: 19px; margin: 18px 18px 0 0; }
  mark { background: #8a8a8a; color: #3a3a3a; padding: 13px 0 0; }
  .handle { position: absolute; width: 13px; height: 13px; margin: -7px; border: 3px solid #4d4d4d; border-radius: 50%; background: #f4f4f4; }
  .tl, .tc, .tr { top: 0; } .ml, .mr { top: 50%; } .bl, .bc, .br { top: 100%; }
  .tl, .ml, .bl { left: 0; } .tc, .bc { left: 50%; } .tr, .mr, .br { left: 100%; }
  .rot { position: absolute; left: calc(50% - 14px); top: -54px; }
  .flow { display: flex; flex-direction: column; align-items: center; width: 242px; padding-top: 38px; }
  .step { width: 100%; height: 85px; border-radius: 5px; background: linear-gradient(90deg, #709fd0, #7aaadb); color: #2a3e50; font: 18px/87px "Liberation Sans", "Noto Sans CJK SC", sans-serif; text-align: center; }
  .step.tall { height: 89px; line-height: 91px; }
  .arrow { height: 63px; } .arrow.a2 { height: 71px; }

  .status { display: flex; align-items: center; height: 25px; padding: 0 5px 0 8px; border-top: 1px solid #f2f2f2; background: #dcdcdc; flex: none; white-space: nowrap; }
  .status .book { margin: 0 19px 0 23px; }
  .langname { margin-right: 18px; }
  .stright { display: flex; align-items: center; height: 100%; margin-left: auto; }
  .notes { gap: 2px; margin-right: 18px; }
  .disp { gap: 2px; margin-right: 19px; }
  .view { display: grid; place-items: center; width: 46px; height: 100%; }
  .view.cur { background: #c0c0c0; }
  .zoomb { margin: 0 7px; }
  .zoom { appearance: none; width: 112px; height: 16px; background: linear-gradient(#555, #555) center / 100% 2px no-repeat; }
  .zoom::-webkit-slider-thumb { appearance: none; width: 7px; height: 14px; background: #555; }
  .pct { margin: 0 15px 0 7px; }

  .taskbar { display: grid; grid-template-columns: 1fr auto 1fr; align-items: center; height: 56px; flex: none; border-top: 1px solid #bcc0c6; background: linear-gradient(90deg, #d3d3d2 21%, #b9c6d2 27%, #b8bfd2 34%, #b4c0ce 38%, #b7bdd0 52%, #b2c2cc 57%, #adc8b8 61%, #b0cdb8 64%, #a9ccc4 66%, #b3c2cc 68%, #c1bdcc 71%, #b9c4d4 74%, #c2ccd6 77%, #d0d5d5 82%, #d3d5d3); }
  .weather { display: flex; align-items: center; gap: 11px; padding-left: 26px; }
  .weather span, .clock span { display: block; }
  .apps { display: flex; }
  .app { position: relative; display: grid; place-items: center; width: 43px; height: 46px; margin: 0 4px; border-radius: 4px; }
  .app.active { background: #dbe3dc; box-shadow: 2px 0 0 -1px #c4d2c6; }
  .app.run::after { content: ""; position: absolute; bottom: 1px; width: 7px; height: 4px; border-radius: 2px; background: #555d68; }
  .app.active::after { width: 18px; background: #0767c0; }
  .tray { display: flex; align-items: center; justify-content: flex-end; padding-right: 21px; gap: 9px; }
  .more { margin-right: 3px; }
  .sync { margin-right: 6px; }
  .ime { font-size: 18px; margin: 0 8px 0 12px; }
  .clock { min-width: 69px; text-align: right; font-size: 13px; }

  .wm { position: absolute; color: #cf5a4b; white-space: nowrap; z-index: 4; }
  .wm.one { left: 235px; top: 888px; font-size: 20px; line-height: 30px; opacity: .85; }
  .wm.two { left: 1691px; top: 860px; font-size: 19px; line-height: 26px; }
</style>
